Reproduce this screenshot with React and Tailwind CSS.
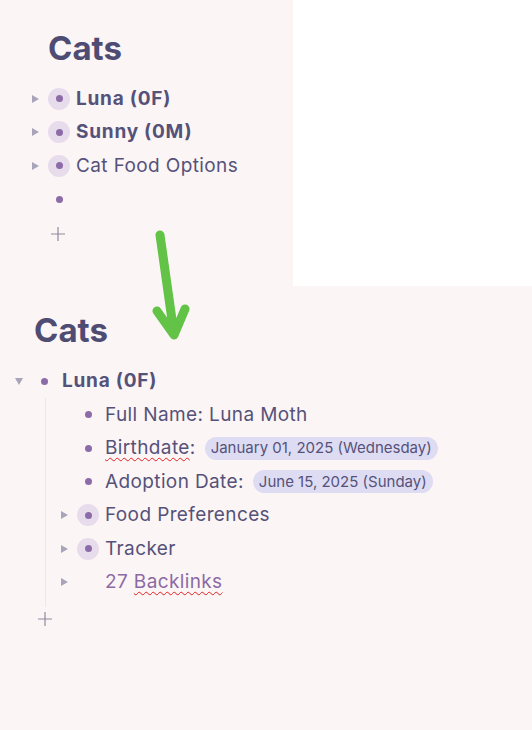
import React from 'react';

const font = { fontFamily: 'Inter, "Noto Sans", sans-serif' };

const Arrow = ({ open }) => (
  <svg width="10" height="10" viewBox="0 0 10 10" className="shrink-0">
    {open ? (
      <path d="M1 2 L9 2 L5 9 Z" fill="#a8a5ba" />
    ) : (
      <path d="M2 1 L9 5 L2 9 Z" fill="#a8a5ba" />
    )}
  </svg>
);

const Bullet = ({ ring }) => (
  <span
    className={`w-[22px] h-[22px] rounded-full flex items-center justify-center shrink-0 ${
      ring ? 'bg-[#e6dcec]' : ''
    }`}
  >
    <span className="w-[7px] h-[7px] rounded-full bg-[#8c6ca8]" />
  </span>
);

const Plus = () => (
  <svg width="16" height="16" viewBox="0 0 16 16">
    <path d="M8 1 V15 M1 8 H15" stroke="#8e8ba0" strokeWidth="1.2" />
  </svg>
);

const Pill = ({ children }) => (
  <span className="ml-[9px] rounded-full bg-[#dedcf3] px-[6px] h-[23px] inline-flex items-center text-[15px] tracking-normal text-[#55527a]">
    {children}
  </span>
);

const TopRow = ({ label, bold, arrow = true, ring = true }) => (
  <div className="h-[33.5px] flex items-center">
    <div className="w-[15px] flex items-center">{arrow && <Arrow />}</div>
    <div className="ml-[3px]">
      <Bullet ring={ring} />
    </div>
    <span className={`ml-[6px] text-[19px] ${bold ? 'font-bold tracking-[0.04em]' : 'tracking-[0.02em]'}`}>{label}</span>
  </div>
);

const ChildRow = ({ arrow, ring, children }) => (
  <div className="h-[33.5px] flex items-center">
    <div className="w-[15px] flex items-center">{arrow && <Arrow />}</div>
    <div className="ml-[3px]">
      {ring !== undefined ? <Bullet ring={ring} /> : <span className="w-[22px] block" />}
    </div>
    <div className="ml-[6px] text-[19px] tracking-[0.02em] flex items-center">{children}</div>
  </div>
);

export default function App() {
  return (
    <div className="w-[532px] h-[730px] bg-white relative overflow-hidden text-[#55527a]" style={font}>
      <div className="w-[293px] h-[286px] bg-[#fcf5f5] pt-[28px]">
        <h1 className="pl-[48px] text-[33px] font-bold leading-[40px] text-[#4f4c73]">Cats</h1>
        <div className="pl-[30px] mt-[14px]">
          <TopRow label="Luna (0F)" bold />
          <TopRow label="Sunny (0M)" bold />
          <TopRow label="Cat Food Options" />
          <TopRow label="" arrow={false} ring={false} />
          <div className="h-[36px] flex items-center pl-[20px]">
            <Plus />
          </div>
        </div>
      </div>

      <div className="h-[444px] bg-[#fcf5f5] pt-[24px]">
        <h1 className="pl-[34px] text-[33px] font-bold leading-[40px] text-[#4f4c73]">Cats</h1>
        <div className="pl-[14px] mt-[14px]">
          <div className="h-[34px] flex items-center">
            <div className="w-[17px] flex items-center">
              <Arrow open />
            </div>
            <div className="ml-[2px]">
              <Bullet ring={false} />
            </div>
            <span className="ml-[7px] text-[19px] font-bold tracking-[0.04em]">Luna (0F)</span>
          </div>
          <div className="ml-[31px] border-l border-[#efe6e9] pl-[13px] pb-[8px]">
            <ChildRow ring={false}>Full Name: Luna Moth</ChildRow>
            <ChildRow ring={false}>
              <span className="underline decoration-wavy decoration-[#e02020] decoration-1 underline-offset-[3px]">Birthdate</span>:
              <Pill>January 01, 2025 (Wednesday)</Pill>
            </ChildRow>
            <ChildRow ring={false}>
              Adoption Date:
              <Pill>June 15, 2025 (Sunday)</Pill>
            </ChildRow>
            <ChildRow arrow ring>Food Preferences</ChildRow>
            <ChildRow arrow ring>Tracker</ChildRow>
            <ChildRow arrow>
              <span className="text-[#8b6aa6]">
                27{' '}
                <span className="underline decoration-wavy decoration-[#e02020] decoration-1 underline-offset-[3px]">Backlinks</span>
              </span>
            </ChildRow>
          </div>
          <div className="h-[24px] flex items-center pl-[23px]">
            <Plus />
          </div>
        </div>
      </div>

      <svg
        className="absolute left-0 top-0 pointer-events-none"
        width="532"
        height="730"
        viewBox="0 0 532 730"
      >
        <path
          d="M160 235 L174 334 M157 311 L174 335 L185 309"
          stroke="#62c346"
          strokeWidth="9"
          strokeLinecap="round"
          strokeLinejoin="round"
          fill="none"
        />
      </svg>
    </div>
  );
}
